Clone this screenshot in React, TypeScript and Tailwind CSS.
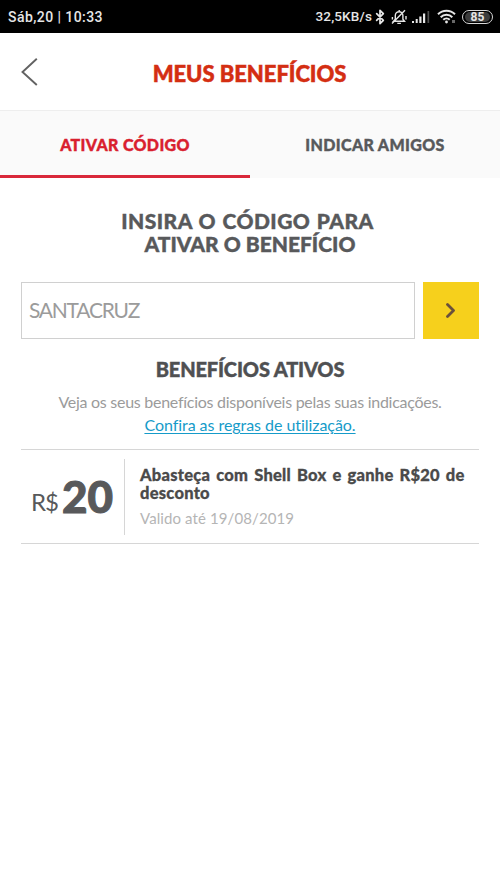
import React from 'react';
import { Bluetooth } from 'lucide-react';

interface Benefit {
  id: number;
  value: string;
  title: string;
  validUntil: string;
}

const TABS = [
  { id: 'ativar', label: 'ATIVAR CÓDIGO' },
  { id: 'indicar', label: 'INDICAR AMIGOS' },
];

const BENEFITS: Benefit[] = [
  {
    id: 1,
    value: '20',
    title: 'Abasteça com Shell Box e ganhe R$20 de desconto',
    validUntil: '19/08/2019',
  },
];

const StatusBar: React.FC = () => (
  <div className="flex h-[33px] items-center justify-between bg-black pl-2 pr-[7px] font-['Roboto',sans-serif] text-[14px] font-medium text-[#e6e6e6]">
    <span className="whitespace-nowrap pt-px tracking-[0.43px]">Sáb,20 | 10:33</span>
    <div className="flex items-center">
      <span className="whitespace-nowrap text-[13.5px] tracking-[0.15px]">32,5KB/s</span>
      <Bluetooth className="h-4 w-4" strokeWidth={2.6} />
      <svg className="ml-[3px] h-4 w-4" viewBox="0 0 16 16" fill="none" stroke="currentColor" strokeWidth="1.4">
        <path d="M2.5 12.3h11l-1.6-2V6.5a3.8 3.8 0 0 0-7.6 0v3.8zM6.3 14.4h3.6M8.2 1v2M14 1.2L1 14.4M1.4 8v2.4M15 7v3.4" />
      </svg>
      <svg className="ml-[5px] h-[14px] w-[18px]" viewBox="0 0 18 14" fill="currentColor">
        <path d="M0 11h2v2H0zM3.7 9h2v4h-2zM7.3 6.5h2.2V13H7.3zM11 3.5h2.2V13H11z" />
        <path d="M15.5 1h1.7v12h-1.7z" opacity="0.35" />
      </svg>
      <svg className="ml-[7px] h-[15px] w-[19px]" viewBox="0 0 19 15" fill="none" stroke="currentColor" strokeWidth="2">
        <path d="M1 5.3a12 12 0 0 1 17 0M3.7 8.2a8 8 0 0 1 11.6 0M6.3 10.8a4.6 4.6 0 0 1 6.4 0" />
        <circle cx="9.5" cy="13" r="1.4" fill="currentColor" stroke="none" />
        <path d="M15 12.5h3" strokeWidth="3" opacity="0.45" />
      </svg>
      <div className="ml-[6px] flex h-[14px] w-[31px] items-center justify-center rounded-full border-[1.5px] border-[#d8d8d8] p-px">
        <span className="flex h-full w-[25px] items-center justify-center rounded-full bg-[#3c3c3c] text-[12px] font-bold leading-none">
          85
        </span>
      </div>
    </div>
  </div>
);

const Header: React.FC = () => (
  <header className="flex h-[78px] items-center border-b border-[#eeeeee]">
    <button className="w-[60px] pl-[21px]" aria-label="Voltar">
      <svg className="h-7 w-[17px]" viewBox="0 0 17 28" fill="none" stroke="#626262" strokeWidth="1.9">
        <path d="M15.8 .8L1.5 14l14.3 13" />
      </svg>
    </button>
    <h1 className="flex-1 whitespace-nowrap pr-[61px] pt-[3px] text-center text-[22px] font-black tracking-[-0.05px] text-[#d42e12] [-webkit-text-stroke:0.5px]">
      MEUS BENEFÍCIOS
    </h1>
  </header>
);

const BenefitCard: React.FC<{ benefit: Benefit }> = ({ benefit }) => (
  <article className="flex h-[95px] items-center border-y border-[#d6d6d6]">
    <div className="flex h-[76px] w-[104px] items-center border-r border-[#d6d6d6] pl-[10px] text-[#58595b]">
      <span className="w-[26px] pt-[11px] text-[24px] leading-none tracking-[-1px]">R$</span>
      <span className="ml-[5px] pb-px text-[44px] font-black leading-none [-webkit-text-stroke:1px]">
        {benefit.value}
      </span>
    </div>
    <div className="flex-1 pl-[15px]">
      <h3 className="text-[16.5px] font-black leading-[18px] tracking-[0.25px] text-[#4a4a4a] [-webkit-text-stroke:0.3px] [word-spacing:1.8px]">
        {benefit.title}
      </h3>
      <p className="mt-[7px] text-[15px] leading-[18px] tracking-[0.1px] text-[#b5b5b5]">
        Valido até {benefit.validUntil}
      </p>
    </div>
  </article>
);

const App: React.FC = () => {
  const [activeTab, setActiveTab] = React.useState('ativar');
  const [code, setCode] = React.useState('SANTACRUZ');

  return (
    <div className="min-h-screen bg-white font-['Lato',sans-serif]">
      <StatusBar />
      <Header />
      <nav className="grid h-[67px] grid-cols-2 bg-[#fafafa]">
        {TABS.map((tab) => (
          <button
            key={tab.id}
            onClick={() => setActiveTab(tab.id)}
            className={`border-b-[3px] pt-[3px] text-[16px] font-black tracking-[0.35px] [-webkit-text-stroke:0.4px] ${
              tab.id === activeTab ? 'border-[#d9283a] text-[#d9202e]' : 'border-transparent text-[#58595b]'
            }`}
          >
            {tab.label}
          </button>
        ))}
      </nav>
      <main className="px-[21px] pt-[31px]">
        <h2 className="text-center text-[21px] font-black leading-[23px] text-[#58595b] [-webkit-text-stroke:0.4px]">
          <span className="pr-[5px] tracking-[0.45px] [word-spacing:1px]">INSIRA O CÓDIGO PARA</span>
          <br />
          ATIVAR O BENEFÍCIO
        </h2>
        <div className="mt-[27px] flex h-[57px] gap-[8px]">
          <input
            className="w-[394px] border border-[#d0d0d0] px-[7px] pb-px text-[21px] tracking-[-1.25px] text-[#9b9b9b] outline-none"
            value={code}
            onChange={(e) => setCode(e.target.value)}
          />
          <button className="flex flex-1 items-center justify-center bg-[#f6d01c]" aria-label="Ativar">
            <svg className="h-[15px] w-[10px]" viewBox="0 0 10 15" fill="none" stroke="#69503c" strokeWidth="2.8">
              <path d="M1.5 1.5l6 6-6 6" strokeLinecap="round" strokeLinejoin="round" />
            </svg>
          </button>
        </div>
        <h2 className="mt-[18px] text-center text-[20px] font-black leading-6 tracking-[-0.15px] text-[#4f5052] [-webkit-text-stroke:0.4px]">
          BENEFÍCIOS ATIVOS
        </h2>
        <p className="mt-[9px] whitespace-nowrap text-center text-[16px] leading-[23px] text-[#9b9b9b]">
          <span className="tracking-[-0.27px]">Veja os seus benefícios disponíveis pelas suas indicações.</span>
          <br />
          <a className="tracking-[-0.05px] text-[#169bc9] underline underline-offset-2">
            Confira as regras de utilização.
          </a>
        </p>
        <section className="mt-[13px]">
          {BENEFITS.map((benefit) => (
            <BenefitCard key={benefit.id} benefit={benefit} />
          ))}
        </section>
      </main>
    </div>
  );
};

export default App;
